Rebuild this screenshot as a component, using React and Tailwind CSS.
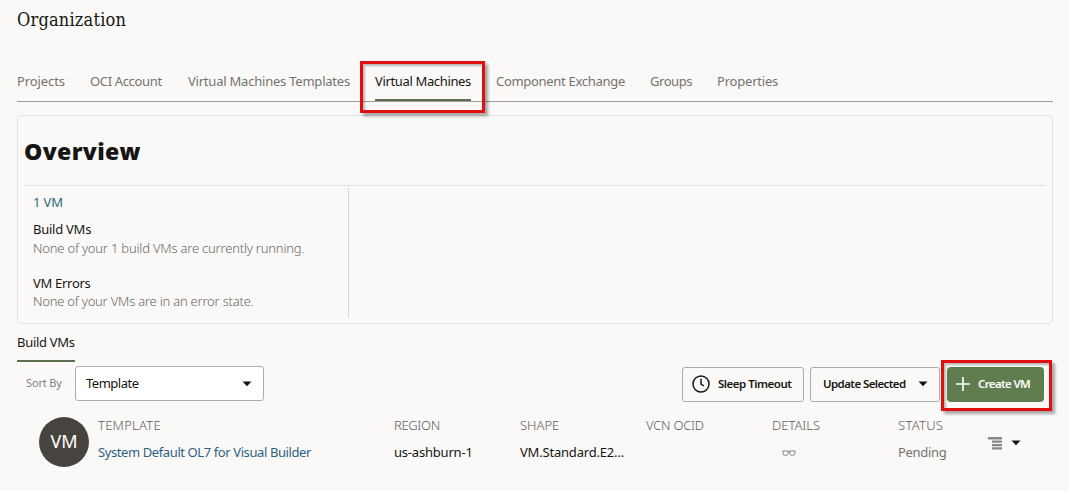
const tabs = [
  { label: 'Projects', box: 'w-[48px]', track: 'tracking-[-0.1px]' },
  { label: 'OCI Account', box: 'w-[73px]', track: 'tracking-[-0.35px]' },
  { label: 'Virtual Machines Templates', box: 'w-[162px]', track: 'tracking-[-0.22px]' },
  { label: 'Virtual Machines', box: 'w-[96px]', track: 'tracking-[-0.35px]', active: true },
  { label: 'Component Exchange', box: 'w-[129px]', track: 'tracking-[-0.3px]' },
  { label: 'Groups', box: 'w-[42px]', track: 'tracking-[-0.45px]' },
  { label: 'Properties', box: 'w-[61px]', track: 'tracking-[-0.2px]' },
];

function Caret() {
  return (
    <svg width="10" height="6" viewBox="0 0 10 6" className="block shrink-0">
      <path d="M0.5 0.5h9L5 5.2z" fill="#161513" />
    </svg>
  );
}

function Highlight({ place }) {
  return (
    <div
      className={`pointer-events-none absolute border-3 border-[#e01010] shadow-[3px_3px_3px_rgba(0,0,0,0.35),inset_2px_2px_2px_rgba(0,0,0,0.25)] ${place}`}
    />
  );
}

function Column({ title, width, track = 'tracking-[-0.2px]', children }) {
  return (
    <div className={`shrink-0 ${width}`}>
      <div className={`h-[27px] leading-[20px] font-light text-[#5f5c58] ${track}`}>{title}</div>
      <div className="h-[20px] leading-[20px] tracking-[-0.2px]">{children}</div>
    </div>
  );
}

export default function App() {
  return (
    <div className="h-[491px] w-[1069px] overflow-hidden bg-[#fbf9f8] pr-[16px] pl-[17px] font-['Noto_Sans',sans-serif] text-[13px] whitespace-nowrap text-[#161513]">
      <h1 className="h-[62px] pt-[8px] font-['DejaVu_Serif_Condensed','DejaVu_Serif',serif] text-[18px] leading-[24px] tracking-[0.2px]">Organization</h1>

      <nav className="flex h-[40px] gap-[25px] border-b border-[#9e9b98]">
        {tabs.map((t) => (
          <div key={t.label} className={`relative h-[39px] leading-[39px] ${t.track} ${t.box} ${t.active ? 'border-b-2 border-[#5c7152]' : 'text-[#75726e]'}`}>
            {t.label}
            {t.active && <Highlight place="-top-[1px] -left-[15px] h-[52px] w-[125px]" />}
          </div>
        ))}
      </nav>

      <section className="mt-[13px] h-[209px] rounded-[5px] border border-[#e1dfdd] px-[6px]">
        <h2 className="h-[70px] border-b border-[#e1dfdd] pt-[18px] font-['Open_Sans',sans-serif] text-[23px] leading-[34px] font-extrabold tracking-[0.35px]">Overview</h2>
        <div className="mt-[2px] h-[130px] w-[325px] border-r border-[#d8d6d4] pl-[9px] leading-[18px] tracking-[-0.1px]">
          <div className="h-[32px] pt-[5px] text-[#30687f]">1 VM</div>
          <div className="tracking-[-0.25px]">Build VMs</div>
          <div className="mt-[1px] font-light tracking-[-0.2px] text-[#6a6763]">None of your 1 build VMs are currently running.</div>
          <div className="mt-[17px] tracking-[-0.3px]">VM Errors</div>
          <div className="font-light tracking-[-0.22px] text-[#6a6763]">None of your VMs are in an error state.</div>
        </div>
      </section>

      <div className="mt-[8px] h-[30px] w-[58px] border-b-2 border-[#5c7152] leading-[20px] tracking-[-0.3px]">Build VMs</div>

      <div className="mt-[4px] flex h-[35px] items-center">
        <span className="w-[58px] pl-[9px] text-[11px] tracking-[-0.15px] text-[#817e7a]">Sort By</span>
        <div className="flex h-[35px] w-[189px] items-center justify-between rounded-[3px] border border-[#aeaca9] bg-white pr-[11px] pl-[10px] tracking-[-0.5px]">
          Template
          <Caret />
        </div>
        <div className="mt-[1px] ml-auto flex text-[11.5px] font-semibold tracking-[-0.5px]">
          <button className="flex h-[35px] w-[122px] items-center rounded-[3px] border border-[#aeaca9] pl-[9px]">
            <svg width="18" height="18" viewBox="0 0 18 18" fill="none" stroke="#161513" strokeWidth="1.5" className="mr-[8px] shrink-0">
              <circle cx="9" cy="9" r="8" />
              <path d="M9 3.8V9l3 2" />
            </svg>
            Sleep Timeout
          </button>
          <button className="ml-[6px] flex h-[35px] w-[130px] items-center justify-between rounded-[3px] border border-[#aeaca9] pr-[11px] pl-[12px] tracking-[-0.6px]">
            Update Selected
            <Caret />
          </button>
          <button className="relative mr-[9px] ml-[7px] flex h-[35px] w-[97px] items-center rounded-[4px] bg-[#5f7d4f] pl-[9px] tracking-[-0.65px] text-white">
            <svg width="14" height="14" viewBox="0 0 14 14" stroke="white" strokeWidth="1.6" className="mr-[8px] shrink-0">
              <path d="M7 0v14M0 7h14" />
            </svg>
            Create VM
            <Highlight place="-top-[7px] -left-[6px] h-[51px] w-[111px]" />
          </button>
        </div>
      </div>

      <div className="mt-[14px] flex pl-[22px]">
        <div className="mt-[2px] mr-[9px] flex size-[50px] shrink-0 items-center justify-center rounded-full bg-[#47433f] pb-[2px] text-[18px] text-white">VM</div>
        <Column title="TEMPLATE" width="w-[296px]" track="tracking-[0.25px]"><span className="tracking-[-0.4px] text-[#2b6282]">System Default OL7 for Visual Builder</span></Column>
        <Column title="REGION" width="w-[126px]" track="tracking-[-0.35px]">us-ashburn-1</Column>
        <Column title="SHAPE" width="w-[126px]" track="tracking-[0px]">VM.Standard.E2…</Column>
        <Column title="VCN OCID" width="w-[126px]" track="tracking-[-0.25px]" />
        <Column title="DETAILS" width="w-[126px]" track="tracking-[0px]">
          <svg width="14" height="20" viewBox="0 0 14 20" fill="none" stroke="#8a8784" strokeWidth="1" className="ml-[10px]">
            <path d="M0.500 9h5.500q1 1 2 0h5.500M1 9v2q0 2.500 2.500 2.500T6.200 11V9M7.800 9v2q0 2.500 2.500 2.500T13 11V9" />
          </svg>
        </Column>
        <Column title="STATUS" width="w-[90px]" track="tracking-[0.3px]"><span className="tracking-[-0.3px] text-[#75726e]">Pending</span></Column>
        <div className="flex h-[56px] items-center gap-[8px]">
          <svg width="15" height="13" viewBox="0 0 15 13" fill="#8b8987">
            <path d="M0 0h14v2.500H0zM4 3.500h10v2.300H4zM4 6.900h10v2.300H4zM4 10.300h10v2.300H4z" />
          </svg>
          <Caret />
        </div>
      </div>
    </div>
  );
}
